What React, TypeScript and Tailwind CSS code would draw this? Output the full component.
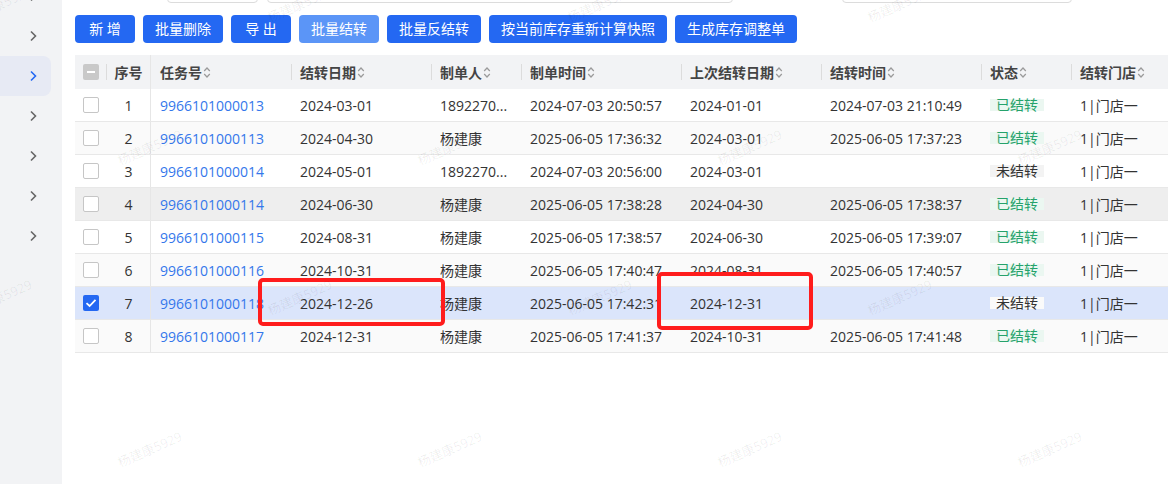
import { Fragment } from 'react';

const font = "font-['Open_Sans','Noto_Sans_CJK_SC',sans-serif]";

const rows = [
  { no: '9966101000013', date: '2024-03-01', maker: '1892270...', made: '2024-07-03 20:50:57', last: '2024-01-01', done: '2024-07-03 21:10:49', ok: true },
  { no: '9966101000113', date: '2024-04-30', maker: '杨建康', made: '2025-06-05 17:36:32', last: '2024-03-01', done: '2025-06-05 17:37:23', ok: true },
  { no: '9966101000014', date: '2024-05-01', maker: '1892270...', made: '2024-07-03 20:56:00', last: '2024-03-01', done: '', ok: false },
  { no: '9966101000114', date: '2024-06-30', maker: '杨建康', made: '2025-06-05 17:38:28', last: '2024-04-30', done: '2025-06-05 17:38:37', ok: true },
  { no: '9966101000115', date: '2024-08-31', maker: '杨建康', made: '2025-06-05 17:38:57', last: '2024-06-30', done: '2025-06-05 17:39:07', ok: true },
  { no: '9966101000116', date: '2024-10-31', maker: '杨建康', made: '2025-06-05 17:40:47', last: '2024-08-31', done: '2025-06-05 17:40:57', ok: true },
  { no: '9966101000118', date: '2024-12-26', maker: '杨建康', made: '2025-06-05 17:42:31', last: '2024-12-31', done: '', ok: false },
  { no: '9966101000117', date: '2024-12-31', maker: '杨建康', made: '2025-06-05 17:41:37', last: '2024-10-31', done: '2025-06-05 17:41:48', ok: true },
];

const headers = ['任务号', '结转日期', '制单人', '制单时间', '上次结转日期', '结转时间', '状态', '结转门店'];

const grid = 'grid grid-cols-[32px_44px_140px_140px_90px_160px_140px_160px_90px_120px]';

// watermark centers, repeated over the page
const marks: [number, number][] = [];
[5, 148, 298, 450].forEach((y, i) => {
  for (let x = i % 2 ? 150 : 0; x < 1200; x += 300) marks.push([x, y]);
});

function Chevron({ active }: { active?: boolean }) {
  return (
    <svg viewBox="0 0 8 12" className="w-2 h-3" fill="none" stroke={active ? '#2468f2' : '#666'} strokeWidth="1.6">
      <path d="M2 1.5 L6.5 6 L2 10.5" />
    </svg>
  );
}

function SortIcon() {
  return (
    <svg viewBox="0 0 8 13" className="w-2 h-[13px] ml-px shrink-0" fill="none" stroke="#9a9a9a" strokeWidth="1.2">
      <path d="M1.2 5 L4 2 L6.8 5" />
      <path d="M1.2 8 L4 11 L6.8 8" />
    </svg>
  );
}

function Checkbox({ checked }: { checked?: boolean }) {
  if (checked)
    return (
      <div className="w-4 h-4 rounded-[2px] bg-[#2468f2] flex items-center justify-center">
        <svg viewBox="0 0 16 16" className="w-4 h-4" fill="none" stroke="white" strokeWidth="1.8">
          <path d="M3.5 8.2 L6.6 11 L12.5 4.8" />
        </svg>
      </div>
    );
  return <div className="w-4 h-4 rounded-[2px] border-[1.5px] border-[#c6c6c6] bg-white" />;
}

export default function App() {
  const buttons = ['新 增', '批量删除', '导 出', '批量结转', '批量反结转', '按当前库存重新计算快照', '生成库存调整单'];

  return (
    <div className={`relative w-[1168px] h-[484px] overflow-hidden bg-white flex ${font}`}>
      {/* Sidebar */}
      <aside className="w-[62px] shrink-0 bg-[#f2f3f5] flex flex-col -mt-6">
        {[0, 1, 2, 3, 4, 5, 6].map((i) => (
          <div
            key={i}
            className={`h-10 w-[51px] flex items-center pl-[29px] rounded-r-lg ${i === 2 ? 'bg-[#e7eaf4]' : ''}`}
          >
            <Chevron active={i === 2} />
          </div>
        ))}
      </aside>

      {/* Main */}
      <main className="flex-1 min-w-0 pl-[13px] flex flex-col">
        {/* search inputs, mostly scrolled out of view */}
        <div className="flex h-8 -mt-[29px]">
          <div className="ml-[92px] w-[91px] h-8 border border-[#dcdcdc] rounded-[4px]" />
          <div className="ml-[9px] w-[466px] h-8 border border-[#dcdcdc] rounded-[4px]" />
          <div className="ml-[109px] w-[230px] h-8 border border-[#dcdcdc] rounded-[4px]" />
        </div>

        <div className="flex gap-2 mt-3">
          {buttons.map((b) => (
            <button
              key={b}
              className={`h-7 min-w-[60px] px-3 rounded-[4px] text-white text-[14px] leading-7 whitespace-nowrap ${
                b === '批量结转' ? 'bg-[#5b95f7]' : 'bg-[#2468f2]'
              }`}
            >
              {b}
            </button>
          ))}
        </div>

        {/* Table */}
        <div className="mt-3 overflow-hidden text-[14px]">
          <div className={`${grid} h-[34px] bg-[#f2f3f5] text-[#444] font-semibold`}>
            <div className="flex items-center pl-2">
              <div className="w-4 h-4 rounded-[2px] bg-[#c9c9c9] flex items-center justify-center">
                <div className="w-2 h-[2px] bg-white" />
              </div>
            </div>
            <div className="flex items-center border-r border-[#e6e6e6]">
              <span className="w-px h-4 bg-[#dcdcdc] -ml-px" />
              <span className="flex-1 text-center">序号</span>
            </div>
            {headers.map((h, i) => (
              <div key={h} className="flex items-center whitespace-nowrap">
                {i > 0 && <span className="w-px h-4 bg-[#dcdcdc]" />}
                <span className={i > 0 ? 'pl-2' : 'pl-[9px]'}>{h}</span>
                <SortIcon />
              </div>
            ))}
          </div>

          {rows.map((r, i) => {
            const bg = i === 6 ? 'bg-[#dbe5fb]' : i === 3 ? 'bg-[#eeeeee]' : i % 2 ? 'bg-[#fafafa]' : 'bg-white';
            return (
              <div key={i} className={`${grid} h-[33px] border-b border-[#e8e8e8] text-[#333] ${bg}`}>
                <div className="flex items-center pl-2">
                  <Checkbox checked={i === 6} />
                </div>
                <div className="flex items-center justify-center border-r border-[#e6e6e6]">{i + 1}</div>
                <div className="flex items-center pl-[9px] text-[#3477eb]">{r.no}</div>
                <div className="flex items-center pl-[9px]">{r.date}</div>
                <div className="flex items-center pl-[9px] whitespace-nowrap">{r.maker}</div>
                <div className="flex items-center pl-[9px]">{r.made}</div>
                <div className="flex items-center pl-[9px]">{r.last}</div>
                <div className="flex items-center pl-[9px]">{r.done}</div>
                <div className="flex items-center pl-[9px]">
                  {r.ok ? (
                    <span className="h-3 leading-3 px-[6px] bg-[#ebf7f1] text-[#26a26b]">已结转</span>
                  ) : (
                    <span className={`h-3 leading-3 px-[6px] ${i === 6 ? 'bg-[#fafafa]' : 'bg-[#f3f3f3]'}`}>未结转</span>
                  )}
                </div>
                <div className="flex items-center pl-[9px] whitespace-nowrap">1|门店一</div>
              </div>
            );
          })}
        </div>
      </main>

      {/* annotations */}
      <div className="absolute left-[258px] top-[278px] w-[187px] h-[48px] border-4 border-[#ff1c1c] rounded-[5px]" />
      <div className="absolute left-[657px] top-[272px] w-[156px] h-[58px] border-4 border-[#ff1c1c] rounded-[5px]" />

      {/* watermark */}
      {marks.map(([x, y]) => (
        <Fragment key={`${x}-${y}`}>
          <span
            className="absolute pointer-events-none -translate-x-1/2 -translate-y-1/2 -rotate-[24deg] text-[13px] text-black/[0.07] whitespace-nowrap"
            style={{ left: x, top: y }}
          >
            杨建康5929
          </span>
        </Fragment>
      ))}
    </div>
  );
}
